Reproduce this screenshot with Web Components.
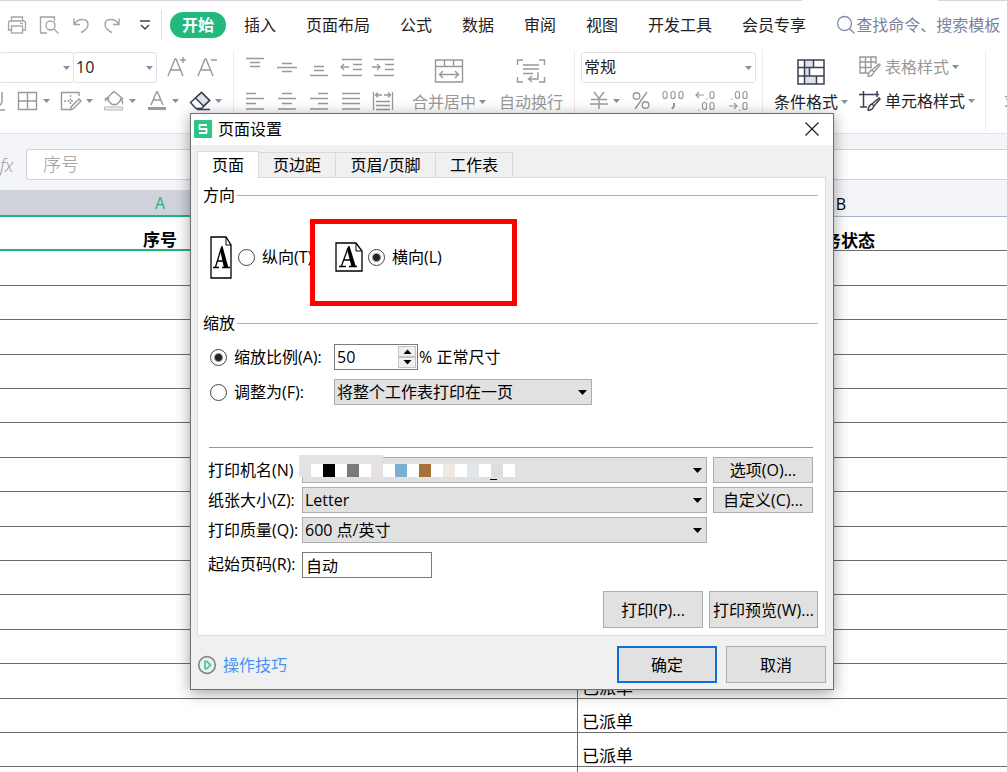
<!DOCTYPE html>
<html lang="zh-CN">
<head>
<meta charset="utf-8">
<title>页面设置</title>
<style>
  html, body { margin: 0; height: 100%; overflow: hidden; background: #fff; }
  body { font: 16px/24px "Open Sans", "Noto Sans CJK SC", sans-serif; color: #000; }
</style>
</head>
<body>
<sheet-app></sheet-app>
<script>
const ICONS = {
  print: [20, 20, '<g fill="none" stroke="#a3a3a3" stroke-width="1.3"><path d="M4.500 6V2h11v4M4 15H1.500V8q0-2 2-2h13q2 0 2 2v7H16"/><rect x="4.500" y="11" width="11" height="7"/><path d="M13 8.500h3"/></g>'],
  preview: [20, 20, '<g fill="none" stroke="#a3a3a3" stroke-width="1.3"><path d="M8 18H1.500V2h14v4"/><circle cx="11.500" cy="10.500" r="4.500"/><path d="M15 14l4.500 4.500"/></g>'],
  undo: [20, 20, '<g fill="none" stroke="#a3a3a3" stroke-width="1.4"><path d="M3 3.500v6h6M3.500 9C7 3 17 3 17 9.500c0 3-3 6.500-7 8"/></g>'],
  redo: [20, 20, '<g fill="none" stroke="#a3a3a3" stroke-width="1.4"><path d="M16 3.500v6h-6M15.500 9C12 3 2 3 2 9.500c0 3 3 6.500 7 8"/></g>'],
  more: [20, 20, '<g fill="none" stroke="#444" stroke-width="1.5"><path d="M5 6h10M6 10l4 4 4-4"/></g>'],
  search: [20, 20, '<g fill="none" stroke="#8791ab" stroke-width="1.4"><circle cx="8.500" cy="8.500" r="7"/><path d="M13.500 13.500l5 5"/></g>'],
  bigger: [20, 22, '<g fill="none" stroke="#999" stroke-width="1.4"><path d="M1 20L8 3h1l7 17M3.500 14h10M13 4h6M16 1v6"/></g>'],
  smaller: [20, 22, '<g fill="none" stroke="#999" stroke-width="1.4"><path d="M1 20L8 3h1l7 17M3.500 14h10M14 4h6"/></g>'],
  under: [7, 22, '<g fill="none" stroke="#999" stroke-width="1.4"><path d="M2 2v9q0 4-4 5M0 20h5"/></g>'],
  borders: [22, 22, '<g fill="none" stroke="#999" stroke-width="1.4"><path d="M1.500 2.500h18v17h-18zM10.500 2.500v17M1.500 11h18"/></g>'],
  drawborder: [22, 22, '<g fill="none" stroke="#999" stroke-width="1.4"><path d="M19 6V2.500H1.500v17H9"/><path stroke-dasharray="2 1.500" d="M4 11h9M10.500 5v10"/><path d="M19 9l2 2-8 8-3 1 1-3z"/></g>'],
  fill: [22, 22, '<path d="M1.500 17h18v3h-18z" fill="#eee" stroke="#b5b5b5"/><path d="M11 1.500L3.500 8.500l5.500 6h4.500l6-6zM6.500 8.500H2.500v3M17 8.500l2.500 3v3" fill="none" stroke="#999" stroke-width="1.4"/>'],
  fontcolor: [22, 22, '<g fill="none" stroke="#999" stroke-width="1.4"><path d="M5 15L10.500 2h1L17 15M7 10h8"/></g><path d="M2 17h18v3H2z" fill="#999"/>'],
  eraser: [22, 22, '<g fill="none" stroke="#3b3f52" stroke-width="1.5"><path d="M1.500 12.500L12.500 2.500l8 8-8 8H7z"/><path fill="#e2e4ec" d="M6.500 8l6-5.500 8 8-6 5.500z"/><path d="M8 19.500h13"/></g>'],
  vtop: [20, 20, '<path d="M1 1.500h18M5 5.500h10M5 9.500h10" stroke="#999" stroke-width="1.3"/>'],
  vmid: [20, 20, '<path d="M5 6.500h10M0 10.500h20M5 14.500h10" stroke="#999" stroke-width="1.3"/>'],
  vbot: [20, 20, '<path d="M5 9.500h10M5 13.500h10M1 18.500h18" stroke="#999" stroke-width="1.3"/>'],
  outdent: [22, 20, '<path d="M2 2.500h20M13 7.500h9M13 12.500h9M2 18.500h20M1 10h8M4 7l-3 3 3 3" fill="none" stroke="#999" stroke-width="1.3"/>'],
  indent: [22, 20, '<path d="M2 2.500h20M13 7.500h9M13 12.500h9M2 18.500h20M0 10h8M5 7l3 3-3 3" fill="none" stroke="#999" stroke-width="1.3"/>'],
  hleft: [20, 20, '<path d="M1 2.500h10M1 7.500h18M1 12.500h10M1 18h18" stroke="#999" stroke-width="1.3"/>'],
  hcen: [20, 20, '<path d="M5 2.500h10M1 7.500h18M5 12.500h10M1 18h18" stroke="#999" stroke-width="1.3"/>'],
  hright: [20, 20, '<path d="M9 2.500h10M1 7.500h18M9 12.500h10M1 18h18" stroke="#999" stroke-width="1.3"/>'],
  hjust: [20, 20, '<path d="M1 2.500h18M1 7.500h18M1 12.500h18M1 18h18" stroke="#999" stroke-width="1.3"/>'],
  hdist: [22, 20, '<path d="M1.500 1v18M20.500 1v18M4 4h6M6 1.500L3.500 4 6 6.500M12 4h6M16 1.500L18.500 4 16 6.500M4 10.500h14M4 14.500h14M4 18.500h14" fill="none" stroke="#999" stroke-width="1.3"/>'],
  merge: [30, 24, '<path d="M1.500 1h27v22h-27zM1.500 7.500h27M10.500 1v6.500M19.500 1v6.500M6 15.500h18M9 12l-3.500 3.500L9 19M21 12l3.500 3.500L21 19" fill="none" stroke="#999" stroke-width="1.4"/>'],
  wrap: [30, 24, '<path d="M7 1H1.500v5M23 1h5.500v5M7 23H1.500v-5M23 23h5.500v-5M7 6h16M7 10h16M7 14.500h10M22 13v7H13M16 17l-3.500 3 3.500 3" fill="none" stroke="#999" stroke-width="1.4"/>'],
  yen: [20, 20, '<path d="M5 1l5 6.500L15 1M2 8.500h16M1 13h18M10 7.500V18" fill="none" stroke="#999" stroke-width="1.4"/>'],
  percent: [20, 20, '<g fill="none" stroke="#999" stroke-width="1.4"><circle cx="5.500" cy="5" r="3.300"/><circle cx="14.500" cy="14" r="3.300"/><path d="M16 1L4 18"/></g>'],
  thousands: [22, 22, '<g fill="none" stroke="#999" stroke-width="1.200"><rect x="1" y="1.500" width="4" height="7" rx="2"/><rect x="9" y="1.500" width="4" height="7" rx="2"/><rect x="17" y="1.500" width="4" height="7" rx="2"/></g><path d="M12 13v3l-2 3" stroke="#999" stroke-width="2" fill="none"/>'],
  decless: [22, 22, '<g fill="none" stroke="#999" stroke-width="1.200"><path d="M1 5h8M4 2L1 5l3 3M11 9h1.500M3 20h1.500"/><rect x="15" y="1.500" width="4" height="7" rx="2"/><rect x="7.500" y="12.500" width="4" height="7" rx="2"/><rect x="15" y="12.500" width="4" height="7" rx="2"/></g>'],
  decmore: [22, 22, '<g fill="none" stroke="#999" stroke-width="1.200"><path d="M1 16h8M6 13l3 3-3 3M3 9h1.500M11 20h1.500"/><rect x="7.500" y="1.500" width="4" height="7" rx="2"/><rect x="15" y="1.500" width="4" height="7" rx="2"/><rect x="15" y="12.500" width="4" height="7" rx="2"/></g>'],
  cond: [28, 26, '<path d="M8 1h8v7H8zM8 9h5v8H8zM8 17h11v8H8z" fill="#dfe1e9"/><path d="M1 1h26v24H1zM1 8.500h26M1 17h26M7.500 1v24M16.500 1v7.500M12.500 8.500V17M19.500 17v8" fill="none" stroke="#3b3f52" stroke-width="1.5"/>'],
  tablestyle: [22, 24, '<path d="M17 9V2H1v16h8M1 7h16M1 12.500h12M6.500 2v16M12 2v10M20 9l1 1-6 7-2-2zM13 15q-3 1-4 6 4 1 6-4" fill="none" stroke="#999" stroke-width="1.4"/>'],
  cellstyle: [22, 24, '<path d="M4.500 2v16M0 5.500h20M18 2v6M1 18h7M20 9l1 1-6 7-2-2zM13 15q-3 1-4 6 4 1 6-4" fill="none" stroke="#3b3f52" stroke-width="1.5"/>'],
  arrow: [7, 4, '<path d="M0 0h7L3.500 4z" fill="#8490a8"/>'],
  darrow: [9, 5, '<path d="M0 0h9L4.500 5z" fill="#000"/>'],
  spin: [9, 5, '<path d="M.5 0h8l-4 4.500z" fill="#000"/>'],
  logo: [18, 18, '<rect width="18" height="18" rx="1" fill="#2cc487"/><path d="M13 5H5.500v4h7v4H5" fill="none" stroke="#fff" stroke-width="1.8" stroke-linejoin="round"/>'],
  close: [14, 14, '<path d="M.5.5l13 13M13.500.5l-13 13" stroke="#222" stroke-width="1.200"/>'],
  play: [20, 20, '<circle cx="10" cy="10" r="8.300" fill="none" stroke="#8a8a8a" stroke-width="1.700"/><path d="M8 6.500h2l3.500 3.500-3.500 3.500H8z" fill="none" stroke="#4ccf96" stroke-width="1.800"/>'],
  portrait: [23, 43, '<path d="M1 1h15l5 8v33H1z" fill="#fff" stroke="#000" stroke-width="1.300"/><path d="M16 1v8h5" fill="none" stroke="#000"/><path d="M3 31.500h6M12 31.500h8M5.500 31L11 13M7.500 25h7" fill="none" stroke="#000" stroke-width="1.300"/><path d="M10 14l4 18h4.500L12.500 10h-1z"/>'],
  landscape: [28, 30, '<path d="M1 1h20l6 8v20H1z" fill="#fff" stroke="#000" stroke-width="1.300"/><path d="M21 1v8h6" fill="none" stroke="#000"/><path d="M4 24.500h7M14 24.500h8M6.500 24L13 6M9 18h8" fill="none" stroke="#000" stroke-width="1.300"/><path d="M12 7l4.500 18H21L14.500 4h-1z"/>']
};

/* Base class: clones a template of styles and markup into an open root. */
class Base extends HTMLElement {
  connectedCallback() {
    if (this.shadowRoot) return;
    const t = document.createElement('template');
    t.innerHTML = '<style>*{box-sizing:border-box}button,input,select{font:inherit;color:inherit;margin:0}button{padding:0}</style>' + this.view();
    this.attachShadow({ mode: 'open' }).append(t.content.cloneNode(true));
    this.ready();
  }
  ready() {}
}
const define = (name, view, ready) => customElements.define(name, class extends Base {
  view() { return view(this); }
  ready() { if (ready) ready(this); }
});

define('ui-icon', el => {
  const [w, h, body] = ICONS[el.getAttribute('name')];
  return `<style>:host{display:block;flex:none}svg{display:block}</style><svg width="${w}" height="${h}" viewBox="0 0 ${w} ${h}" aria-hidden="true">${body}</svg>`;
});

define('tool-button', el => `
<style>
  :host { display: block; flex: none; }
  button { border: 0; background: none; display: flex; align-items: center; gap: 4px; }
</style>
<button type="button" aria-label="${el.getAttribute('label') || ''}"><ui-icon name="${el.getAttribute('icon')}"></ui-icon>${el.hasAttribute('menu') ? '<ui-icon name="arrow"></ui-icon>' : ''}</button>`);

define('text-tool', el => `
<style>
  :host { display: block; flex: none; }
  button { border: 0; background: none; display: flex; align-items: center; gap: 4px; white-space: nowrap; color: var(--tool-color, #999); }
  span { display: flex; align-items: center; gap: 3px; }
  :host([big]) button { flex-direction: column; justify-content: space-between; height: 64px; padding-top: 9px; }
</style>
<button type="button"><ui-icon name="${el.getAttribute('icon')}"></ui-icon><span><slot></slot>${el.hasAttribute('menu') ? '<ui-icon name="arrow"></ui-icon>' : ''}</span></button>`);

define('ribbon-select', el => `
<style>
  :host { display: block; position: relative; }
  select { appearance: none; width: 100%; height: 31px; border: 1px solid #e2e2e4; border-radius: 3px; background: #fff; padding: 0 2px; color: #222; }
  ui-icon { position: absolute; right: 4px; top: 14px; pointer-events: none; }
</style>
<select aria-label="${el.getAttribute('label')}"><option>${el.getAttribute('value') || ''}</option></select><ui-icon name="arrow"></ui-icon>`);

define('menu-bar', () => `
<style>
  :host { display: flex; align-items: center; height: 50px; background: linear-gradient(90deg, #d5d5de 802px, #fff 802px 938px, #d5d5de 938px) top / 100% 1px no-repeat #fff; color: #222; white-space: nowrap; }
  .quick { display: flex; gap: 12px; padding: 0 6px 0 7px; }
  .quick button { border: 0; background: none; }
  nav { display: flex; align-items: center; gap: 30px; border-left: 1px solid #dedede; height: 30px; padding-left: 8px; }
  a { color: inherit; text-decoration: none; }
  a.on { background: #21b97e; color: #fff; font-weight: bold; border-radius: 13px; line-height: 26px; width: 56px; text-align: center; margin-right: -12px; }
  .search { display: flex; align-items: center; margin-left: 30px; flex: 1; color: #7a849e; }
  input { border: 0; outline: 0; background: none; padding: 0; min-width: 0; width: 100%; height: 26px; }
  input::placeholder { color: #7a849e; opacity: 1; }
</style>
<div class="quick">${[['print', '打印'], ['preview', '打印预览'], ['undo', '撤销'], ['redo', '恢复'], ['more', '更多']].map(([i, l]) => `<button type="button" aria-label="${l}"><ui-icon name="${i}"></ui-icon></button>`).join('')}</div>
<nav><a class="on" href="#home">开始</a>${['插入', '页面布局', '公式', '数据', '审阅', '视图', '开发工具', '会员专享'].map(t => `<a href="#">${t}</a>`).join('')}</nav>
<label class="search"><ui-icon name="search"></ui-icon><input type="text" aria-label="搜索" placeholder="查找命令、搜索模板"></label>`);

define('ribbon-bar', () => `
<style>
  :host { display: flex; height: 84px; background: #fff; border-bottom: 1px solid #e3e4e7; overflow: hidden; }
  section { flex: none; border-right: 1px solid #ececee; height: 81px; }
  .row { display: flex; align-items: center; height: 34px; }
  .font { width: 234px; }
  .font .row { gap: 10px; }
  .combos { display: flex; width: 157px; }
  .name { width: 75px; margin-left: -1px; } .size { width: 84px; margin-left: -1px; }
  .align { width: 341px; display: flex; gap: 13px; padding-left: 5px; }
  .grid { display: grid; grid-template-columns: repeat(5, 32px); grid-auto-rows: 34px; place-items: center; height: 68px; }
  .number { width: 188px; padding: 0 6px; }
  .number .row + .row { gap: 11px; padding-left: 8px; }
  .number ribbon-select { flex: 1; }
  .style { width: 223px; display: flex; gap: 11px; padding-left: 11px; }
  .dark { --tool-color: #222; }
  .last { border: 0; padding: 39px 0 0 18px; color: #999; white-space: nowrap; }
</style>
<section class="font">
  <div class="row"><div class="combos"><ribbon-select class="name" label="字体"></ribbon-select><ribbon-select class="size" label="字号" value="10"></ribbon-select></div>
    <tool-button icon="bigger" label="增大字号"></tool-button><tool-button icon="smaller" label="减小字号"></tool-button></div>
  <div class="row"><tool-button icon="under" label="下划线"></tool-button><tool-button icon="borders" label="边框" menu></tool-button><tool-button icon="drawborder" label="绘制边框" menu></tool-button><tool-button icon="fill" label="填充" menu></tool-button><tool-button icon="fontcolor" label="字体颜色" menu></tool-button><tool-button icon="eraser" label="清除" menu></tool-button></div>
</section>
<section class="align">
  <div class="grid">${['vtop', 'vmid', 'vbot', 'outdent', 'indent', 'hleft', 'hcen', 'hright', 'hjust', 'hdist'].map(i => `<tool-button icon="${i}" label="对齐"></tool-button>`).join('')}</div>
  <text-tool big menu icon="merge">合并居中</text-tool><text-tool big icon="wrap">自动换行</text-tool>
</section>
<section class="number">
  <div class="row"><ribbon-select label="数字格式" value="常规"></ribbon-select></div>
  <div class="row"><tool-button icon="yen" label="货币" menu></tool-button><tool-button icon="percent" label="百分比"></tool-button><tool-button icon="thousands" label="千位分隔"></tool-button><tool-button icon="decless" label="增加小数位"></tool-button><tool-button icon="decmore" label="减少小数位"></tool-button></div>
</section>
<section class="style">
  <text-tool class="dark" big menu icon="cond">条件格式</text-tool>
  <div><div class="row"><text-tool menu icon="tablestyle">表格样式</text-tool></div><div class="row"><text-tool class="dark" menu icon="cellstyle">单元格样式</text-tool></div></div>
</section>
<section class="last">求和</section>`);

define('formula-bar', () => `
<style>
  :host { display: flex; align-items: center; height: 56px; padding-top: 5px; box-sizing: border-box; background: #f4f5f8; }
  i { width: 26px; font: italic 300 18px/24px "Open Sans", sans-serif; color: #999; flex: none; }
  input { flex: 1; min-width: 0; height: 31px; border: 1px solid #ced2da; border-radius: 3px 0 0 3px; border-right: 0; background: #fff; padding: 0 16px 4px; font-size: 18px; color: #999; font-weight: 300; }
</style>
<i>fx</i><input type="text" aria-label="编辑栏" value="序号">`);

define('sheet-grid', () => `
<style>
  :host { display: block; overflow: hidden; flex: 1; }
  table { margin-left: -257px; width: 1361px; table-layout: fixed; border-spacing: 0; font-size: 17px; }
  th, td { padding: 0; height: 34px; line-height: 20px; vertical-align: bottom; border-bottom: 1px solid #6c6c6c; }
  tr > :first-child { width: 835px; border-right: 1px solid #6c6c6c; }
  td + td { padding-left: 4px; }
  thead th { height: 27px; font-weight: normal; font-size: 16px; line-height: 24px; background: #f4f5f8; border-bottom-color: #a9b5c8; }
  thead th:first-child { background: #d0d3dc; color: #1fb579; border-bottom: 2px solid #1fb579; }
  .head :first-child { border-bottom: 2px solid #1fb579; }
  .head th { line-height: 18px; }
  tbody tr:nth-child(5n+2) td, tbody tr:nth-child(5n+4) td { height: 35px; }
</style>
<table>
  <thead><tr><th scope="col">A</th><th scope="col">B</th></tr></thead>
  <tbody><tr class="head"><th>序号</th><th>任务状态</th></tr>
  ${Array.from({ length: 16 }, (_, i) => `<tr><td></td><td>${i > 11 && i < 15 ? '已派单' : ''}</td></tr>`).join('')}</tbody>
</table>`);

define('radio-option', el => `
<style>
  :host { display: block; flex: none; }
  label { display: flex; align-items: center; gap: 7px; white-space: nowrap; }
  input { appearance: none; width: 17px; height: 17px; border: 1px solid #444; border-radius: 50%; background: #fff; }
  input:checked { background: radial-gradient(circle, #222 3px, #fff 5px); }
</style>
<label><input type="radio" ${el.hasAttribute('checked') ? 'checked' : ''}><slot></slot></label>`,
el => el.shadowRoot.querySelector('input').addEventListener('change', () => {
  el.getRootNode().querySelectorAll(`radio-option[group="${el.getAttribute('group')}"]`).forEach(o => {
    if (o !== el) o.shadowRoot.querySelector('input').checked = false;
  });
}));

define('drop-down', el => `
<style>
  :host { display: flex; align-items: center; height: 26px; white-space: nowrap; }
  label { width: 94px; flex: none; }
  .box { position: relative; flex: 1; }
  select { display: block; appearance: none; width: 100%; height: 26px; border: 1px solid #adadad; border-radius: 0; background: #e1e1e1; padding: 0 2px; }
  ui-icon { position: absolute; right: 5px; top: 11px; pointer-events: none; }
</style>
${el.hasAttribute('label') ? `<label for="s">${el.getAttribute('label')}</label>` : ''}
<div class="box"><select id="s" aria-label="${el.getAttribute('label') || el.getAttribute('name')}"><option>${el.getAttribute('value') || ''}</option></select><ui-icon name="darrow"></ui-icon><slot></slot></div>`);

define('number-spinner', el => `
<style>
  :host { display: flex; height: 26px; width: 84px; border: 1px solid #7a7a7a; box-sizing: border-box; background: #fff; padding: 1px; flex: none; }
  input { flex: 1; min-width: 0; border: 0; outline: 0; padding: 0 1px; background: none; }
  div { display: grid; width: 18px; grid-template-rows: 1fr 1fr; }
  button { border: 1px solid #c4c4c4; background: #f0f0f0; display: grid; place-items: center; }
  .up ui-icon { rotate: 180deg; }
</style>
<input type="text" inputmode="numeric" aria-label="缩放比例" value="${el.getAttribute('value')}">
<div><button class="up" type="button" aria-label="增加"><ui-icon name="spin"></ui-icon></button><button class="down" type="button" aria-label="减少"><ui-icon name="spin"></ui-icon></button></div>`,
el => {
  const f = el.shadowRoot.querySelector('input');
  el.shadowRoot.querySelector('.up').onclick = () => f.value = +f.value + 1;
  el.shadowRoot.querySelector('.down').onclick = () => f.value = +f.value - 1;
});

define('push-button', () => `
<style>
  :host { display: block; width: 100px; height: 37px; }
  button { width: 100%; height: 100%; border: 1px solid #adadad; background: #e1e1e1; white-space: nowrap; }
  :host([small]) { height: 26px; }
  :host([primary]) button { border: 2px solid #0f6fd4; }
</style>
<button type="button"><slot></slot></button>`);

define('group-title', () => `
<style>
  :host { display: flex; align-items: center; gap: 2px; height: 24px; }
  :host::after { content: ""; flex: 1; height: 1px; background: #adadad; }
</style><slot></slot>`);

/* Strip of solid blocks that masks the printer's name. */
define('name-mask', () => `
<style>
  :host { position: absolute; left: -3px; top: -2px; height: 22px; display: flex; align-items: flex-end; background: linear-gradient(#e3e3e3, #e3e3e3) 0 0 / 84px 10px no-repeat; pointer-events: none; }
  span { width: 12px; height: 13px; }
  b { position: absolute; left: 191px; top: 24px; width: 7px; height: 1px; background: #000; }
</style>${['#e3e3e3', '#fff', '#000', '#fff', '#7a7a78', '#fff', '#e9e1e1', '#fff', '#7bafd1', '#fff', '#a8713b', '#fff', '#efe9e2', '#fff', '#e0e6eb', '#fff', '#dedede', '#fff'].map(c => `<span style="background:${c}"></span>`).join('')}<b></b>`);

define('page-setup', () => `
<style>
  :host { position: absolute; left: 190px; top: 113px; width: 644px; box-sizing: border-box; border: 1px solid #6f6f6f; background: #f0f0f0; box-shadow: 0 3px 14px rgba(0,0,0,.38); }
  header { display: flex; align-items: center; gap: 6px; height: 31px; background: #fff; padding: 0 14px 2px 3px; }
  h1 { font-size: 16px; font-weight: normal; margin: 0; flex: 1; }
  header button { border: 0; background: none; }
  .tabs { display: flex; margin: 6px 7px 0 6px; height: 27px; align-items: flex-end; }
  .tabs button { height: 26px; border: 1px solid #d9d9d9; border-left: 0; background: #f0f0f0; width: 77px; }
  .tabs .on { height: 27px; width: 62px; border: 1px solid #dcdcdc; border-bottom: 0; background: #fff; position: relative; }
  .tabs .wide { width: 100px; }
  main { margin: -1px 7px 0 6px; border: 1px solid #dcdcdc; background: #fff; padding: 5px 7px 7px 5px; }
  .orient { position: relative; display: flex; align-items: center; height: 42px; margin: 29px 0 33px 7px; }
  .orient ui-icon { margin-right: 5px; }
  .orient radio-option { width: 97px; }
  .frame { position: absolute; left: 100px; top: -17px; width: 207px; height: 87px; border: 5px solid #f00; pointer-events: none; }
  .scale { display: grid; grid-template-columns: 124px 1fr; row-gap: 9px; align-items: center; padding: 9px 0 0 7px; }
  .pct { display: flex; align-items: center; gap: 1px; }
  .scale drop-down { width: 258px; }
  hr { border: 0; height: 1px; background: #999; margin: 42px 5px 9px 6px; }
  .print { display: grid; grid-template-columns: 1fr 100px; gap: 4px 6px; padding: 0 5px; }
  .start { display: flex; grid-column: 1 / -1; margin-top: 5px; height: 26px; align-items: center; }
  .start label { width: 94px; padding-bottom: 3px; }
  .start input { width: 130px; height: 26px; border: 1px solid #7a7a7a; background: #fff; padding: 0 3px; }
  .actions { display: flex; justify-content: flex-end; gap: 6px; margin-top: 13px; }
  .actions :last-child { width: 109px; }
  footer { display: flex; align-items: center; gap: 9px; padding: 10px 7px 6px 6px; }
  footer a { flex: 1; display: flex; align-items: center; gap: 6px; color: #4a90f2; text-decoration: none; }
</style>
<header><ui-icon name="logo"></ui-icon><h1>页面设置</h1><button type="button" aria-label="关闭"><ui-icon name="close"></ui-icon></button></header>
<div class="tabs" role="tablist"><button class="on" role="tab" aria-selected="true">页面</button><button role="tab">页边距</button><button class="wide" role="tab">页眉/页脚</button><button role="tab">工作表</button></div>
<main>
  <group-title>方向</group-title>
  <div class="orient"><ui-icon name="portrait"></ui-icon><radio-option group="o">纵向(T)</radio-option><ui-icon name="landscape"></ui-icon><radio-option group="o" checked>横向(L)</radio-option><div class="frame"></div></div>
  <group-title>缩放</group-title>
  <div class="scale">
    <radio-option group="s" checked>缩放比例(A):</radio-option><div class="pct"><number-spinner value="50"></number-spinner>% 正常尺寸</div>
    <radio-option group="s">调整为(F):</radio-option><drop-down name="调整为" value="将整个工作表打印在一页"></drop-down>
  </div>
  <hr>
  <div class="print">
    <drop-down label="打印机名(N)"><name-mask></name-mask></drop-down><push-button small>选项(O)...</push-button>
    <drop-down label="纸张大小(Z):" value="Letter"></drop-down><push-button small>自定义(C)...</push-button>
    <drop-down label="打印质量(Q):" value="600 点/英寸"></drop-down><span></span>
    <div class="start"><label for="first">起始页码(R):</label><input id="first" type="text" value="自动"></div>
  </div>
  <div class="actions"><push-button>打印(P)...</push-button><push-button>打印预览(W)...</push-button></div>
</main>
<footer><a href="#tips"><ui-icon name="play"></ui-icon>操作技巧</a><push-button primary>确定</push-button><push-button>取消</push-button></footer>`);

define('sheet-app', () => `
<style>:host { display: flex; flex-direction: column; height: 100vh; overflow: hidden; position: relative; }
menu-bar, ribbon-bar, formula-bar { flex: none; } ribbon-bar { box-sizing: border-box; }</style>
<menu-bar></menu-bar><ribbon-bar></ribbon-bar><formula-bar></formula-bar><sheet-grid></sheet-grid><page-setup></page-setup>`);
</script>
</body>
</html>
